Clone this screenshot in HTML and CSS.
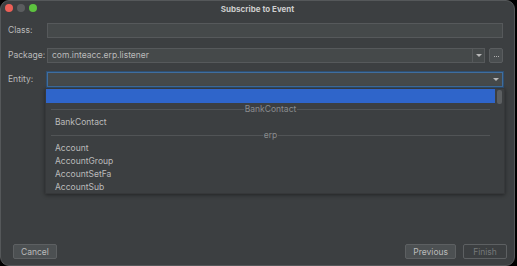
FILE: index.html
```html
<!DOCTYPE html>
<html>
<head>
    <meta charset="UTF-8">
    <title>Subscribe to Event</title>
    <link rel="stylesheet" href="styles.css">
</head>
<body>
<div class="window">
    <div class="titlebar">
        <div class="lights">
            <span class="light red"></span>
            <span class="light gray"></span>
            <span class="light green"></span>
        </div>
        <div class="title">Subscribe to Event</div>
    </div>
    <div class="form">
        <label class="label">Class:</label>
        <div class="field"><div class="input"></div></div>

        <label class="label">Package:</label>
        <div class="field">
            <div class="input combo">
                <span class="value">com.inteacc.erp.listener</span>
                <span class="arrow split"><i class="tri"></i></span>
            </div>
            <div class="browse"><i></i><i></i><i></i></div>
        </div>

        <label class="label">Entity:</label>
        <div class="field">
            <div class="input combo focus">
                <span class="value"></span>
                <span class="arrow"><i class="tri"></i></span>
            </div>
        </div>
    </div>
    <div class="spacer"></div>
    <div class="buttons">
        <button class="btn">Cancel</button>
        <div class="right">
            <button class="btn">Previous</button>
            <button class="btn disabled">Finish</button>
        </div>
    </div>

    <!-- popup list of the entity combo -->
    <div class="popup">
        <ul class="list">
            <li class="row sel"></li>
            <li class="sep"><span>BankContact</span></li>
            <li class="row">BankContact</li>
            <li class="sep"><span>erp</span></li>
            <li class="row">Account</li>
            <li class="row">AccountGroup</li>
            <li class="row">AccountSetFa</li>
            <li class="row">AccountSub</li>
        </ul>
        <div class="scroll"><div class="thumb"></div></div>
    </div>
</div>
</body>
</html>
```

FILE: styles.css
```css
*{margin:0;padding:0;box-sizing:border-box;}
html,body{height:100%;}
body{background:#000;font:8.5px/1.2 "Inter","Liberation Sans",sans-serif;color:#bbbbbb;overflow:hidden;}
ul,li{list-style:none;}

.window{position:relative;width:515px;height:266px;background:#3c3f41;border:1px solid #55585a;border-radius:9px;display:flex;flex-direction:column;}

.titlebar{height:17px;display:flex;align-items:center;justify-content:center;position:relative;}
.lights{position:absolute;left:4px;top:3px;display:flex;gap:4px;}
.light{width:8px;height:8px;border-radius:50%;}
.light.red{background:#ec5f57;}
.light.gray{background:#5b5d5f;}
.light.green{background:#5dc33f;}
.title{font-weight:700;font-size:8px;color:#cdcdcd;}

.form{display:grid;grid-template-columns:39px 1fr;grid-auto-rows:15px;row-gap:9.5px;padding:5px 11px 0 7px;align-items:center;}
.label{font-size:8.5px;color:#bbbbbb;}
.field{display:flex;gap:4px;height:15px;}
.input{flex:1;height:15px;background:#45494a;border:1px solid #56595b;display:flex;align-items:center;}
.combo .value{flex:1;padding-left:4px;color:#bbbbbb;}
.arrow{width:12px;height:100%;display:flex;align-items:center;justify-content:center;}
.arrow.split{border-left:1px solid #56595b;}
.tri{width:0;height:0;border-left:3px solid transparent;border-right:3px solid transparent;border-top:3px solid #b8b8b8;}
.focus{border-color:#3f6e9f;box-shadow:0 0 0 1px #2e4f72;}
.browse{width:14px;height:15px;border:1px solid #5a5d5f;border-radius:2px;background:#4a4e50;display:flex;align-items:center;justify-content:center;gap:1px;padding-top:3px;}
.browse i{width:1px;height:1px;background:#b0b0b0;}

.spacer{flex:1;}
.buttons{display:flex;justify-content:space-between;padding:0 7px 6px 12px;}
.right{display:flex;gap:7px;}
.btn{height:15px;padding:0 7px;background:#4c5052;border:1px solid #5d6062;border-radius:2px;color:#bbbbbb;font:8.5px "Inter","Liberation Sans",sans-serif;}
.btn:first-child{min-width:43px;}
.right .btn{min-width:44px;}
.right .btn:first-child{min-width:50px;}
.btn.disabled{background:#3c3f41;color:#75787a;}

.popup{position:absolute;left:44px;top:87px;width:460px;height:106px;background:#3c3f41;box-shadow:0 1px 4px rgba(0,0,0,.45);border:1px solid #36383a;display:flex;}
.list{flex:1;}
.row{height:13px;line-height:13px;padding-left:9px;color:#bbbbbb;}
.row.sel{height:14px;background:#2f65ca;}
.sep{height:13px;display:flex;align-items:center;padding:0 5px;color:#8a8c8e;}
.sep::before,.sep::after{content:"";flex:1;height:1px;background:#515456;}
.sep span{padding:0 1px;}
.scroll{width:9px;padding:1px 1px 0 2px;}
.thumb{width:5px;height:14px;border-radius:2px;background:#5c5f61;}
```
